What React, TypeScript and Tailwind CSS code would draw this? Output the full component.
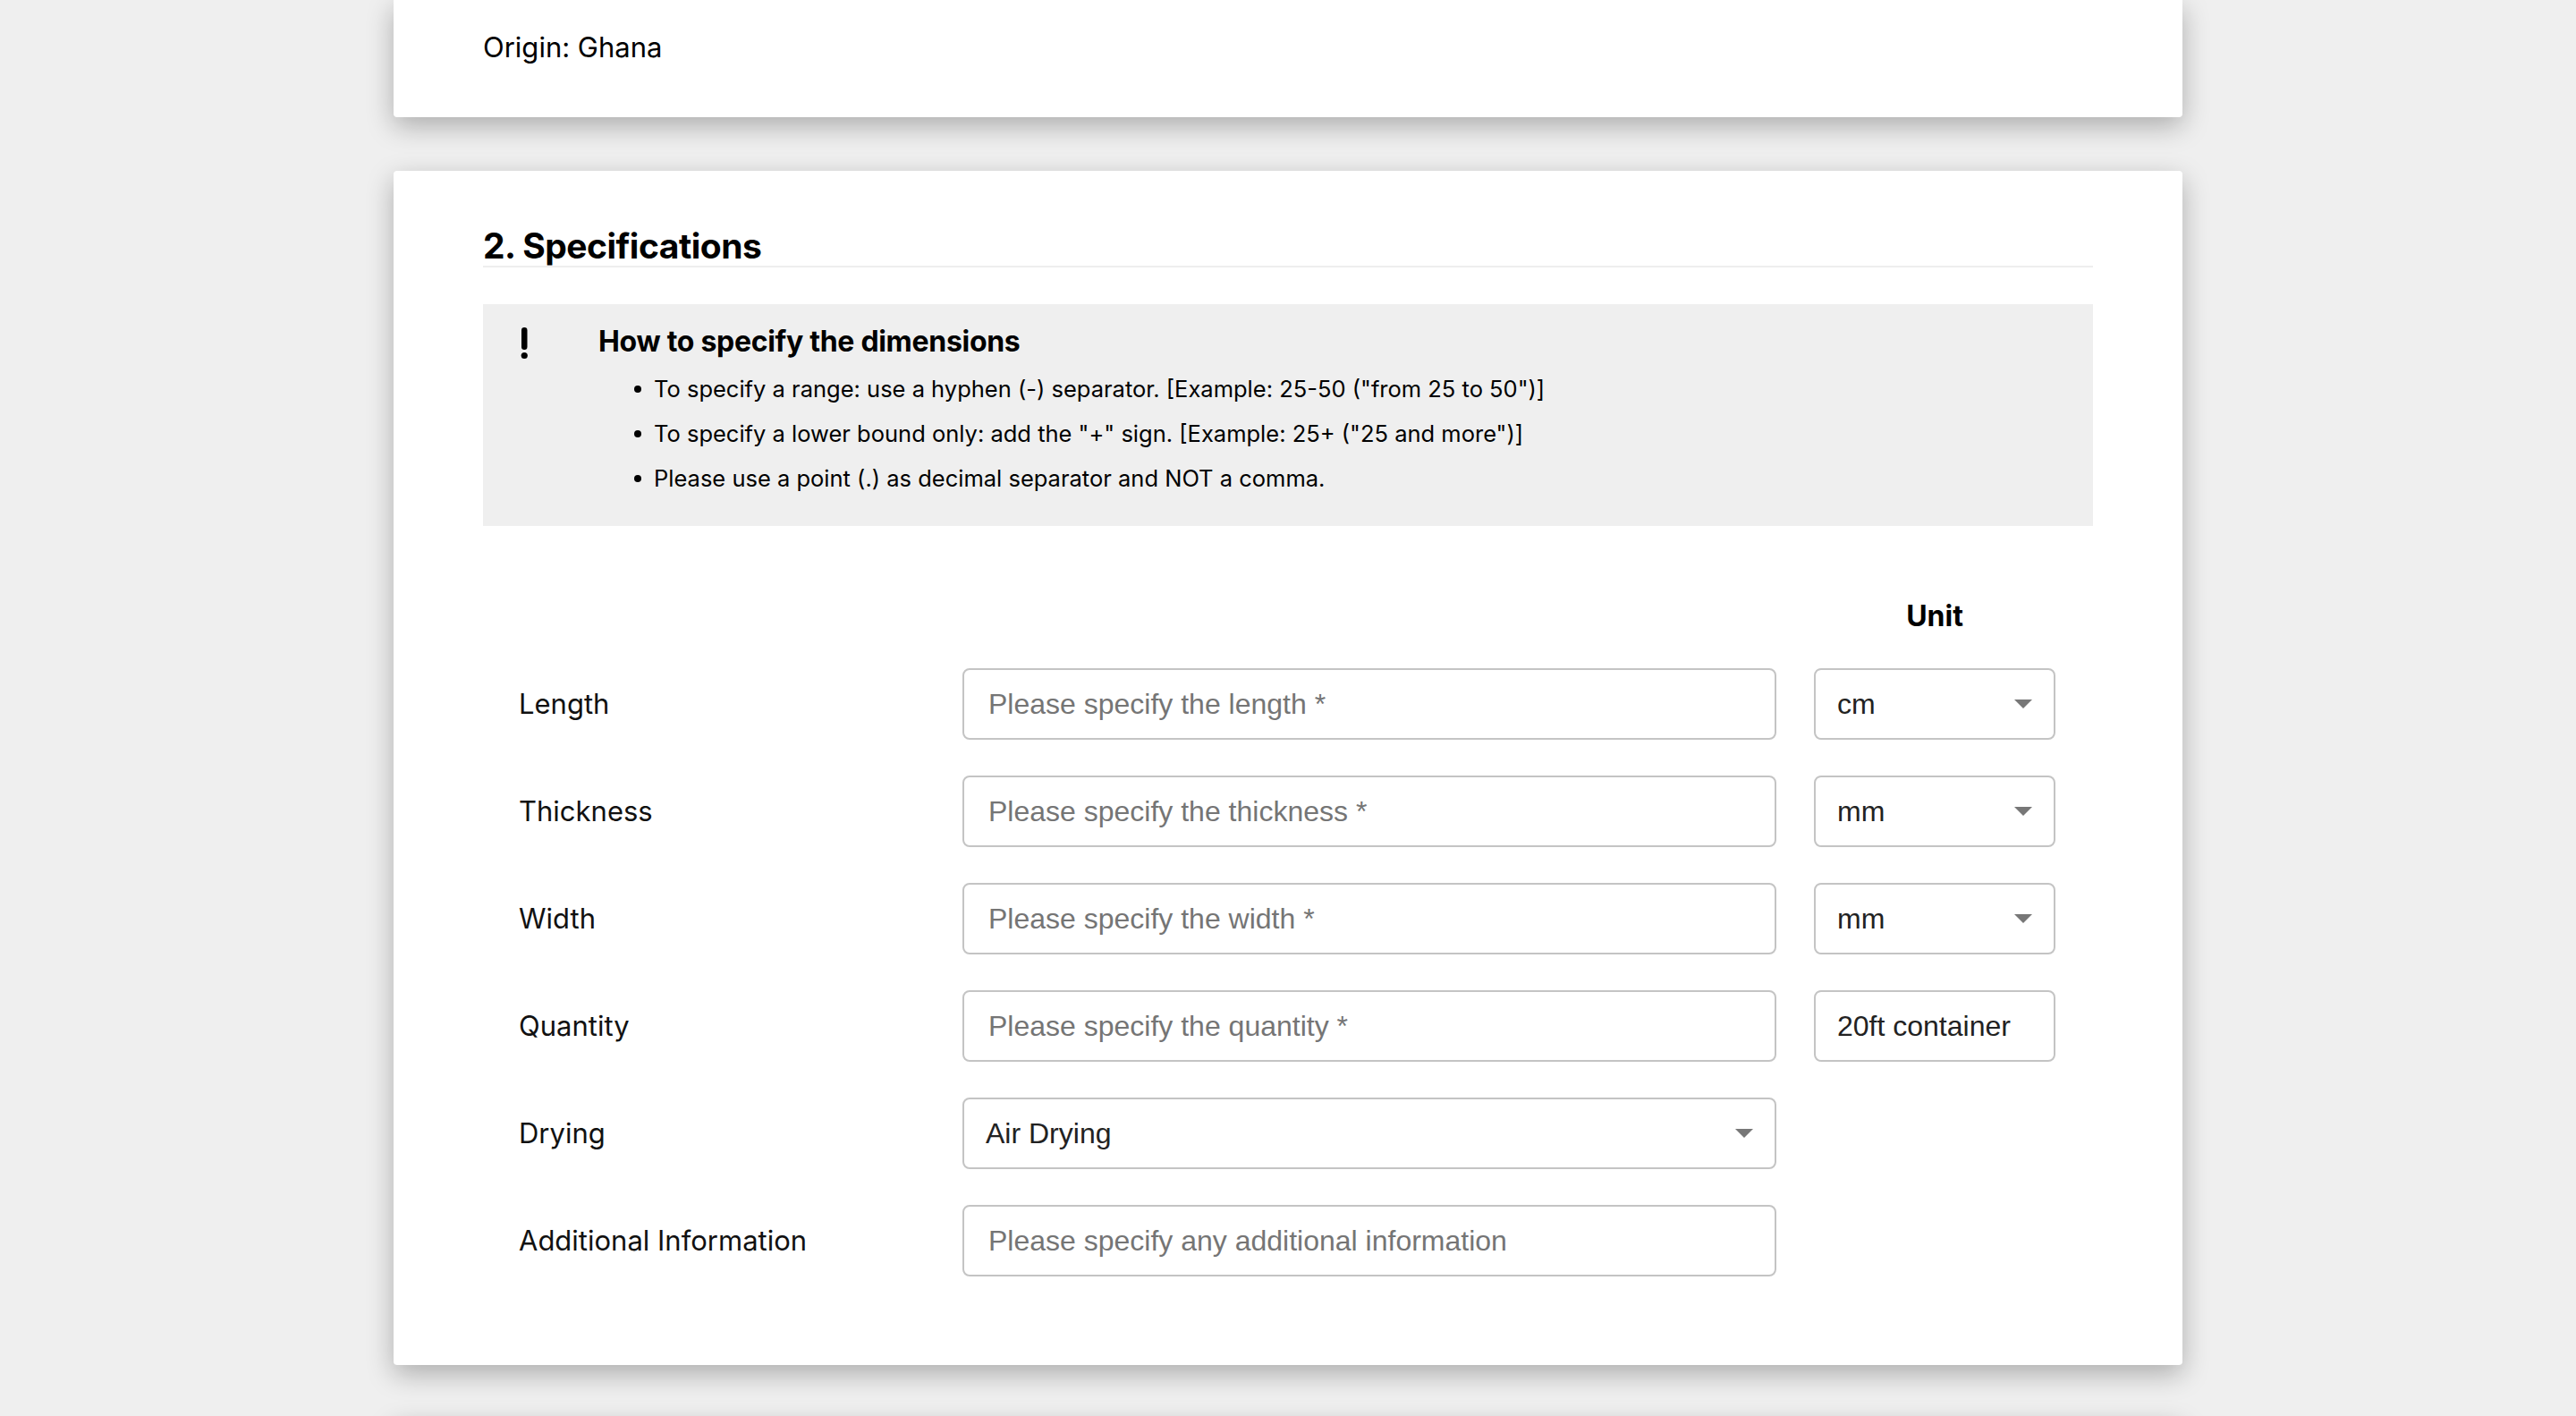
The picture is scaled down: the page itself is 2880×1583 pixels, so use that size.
import React from 'react';

const rows = [
  { label: 'Length', placeholder: 'Please specify the length *', unit: 'cm', select: true },
  { label: 'Thickness', placeholder: 'Please specify the thickness *', unit: 'mm', select: true },
  { label: 'Width', placeholder: 'Please specify the width *', unit: 'mm', select: true },
  { label: 'Quantity', placeholder: 'Please specify the quantity *', unit: '20ft container', select: false },
];

const tips = [
  'To specify a range: use a hyphen (-) separator. [Example: 25-50 ("from 25 to 50")]',
  'To specify a lower bound only: add the "+" sign. [Example: 25+ ("25 and more")]',
  'Please use a point (.) as decimal separator and NOT a comma.',
];

const fieldFont = { fontFamily: '"Liberation Sans", Arial, sans-serif' };

function Caret() {
  return (
    <svg width="20" height="10" viewBox="0 0 20 10" className="shrink-0">
      <path d="M0 0 L20 0 L10 10 Z" fill="#777777" />
    </svg>
  );
}

function TextField({ placeholder }: { placeholder: string }) {
  return (
    <input
      type="text"
      placeholder={placeholder}
      className="h-[80px] w-full rounded-[8px] border-2 border-[#c4c4c4] bg-white px-[27px] text-[32px] text-[#222] outline-none placeholder:text-[#757575]"
      style={fieldFont}
    />
  );
}

function SelectBox({ value, arrow = true }: { value: string; arrow?: boolean }) {
  return (
    <div
      className="flex h-[80px] w-full items-center justify-between rounded-[8px] border-2 border-[#c4c4c4] bg-white px-[24px] text-[32px] text-[#222]"
      style={fieldFont}
    >
      <span>{value}</span>
      {arrow && <Caret />}
    </div>
  );
}

function FormRow({ label, children, unit }: { label: string; children?: React.ReactNode; unit?: React.ReactNode }) {
  return (
    <div className="grid grid-cols-[454px_910px_270px] items-center gap-x-[42px]">
      <div className="text-[31px] leading-[40px] text-[#111]">{label}</div>
      <div>{children}</div>
      <div>{unit}</div>
    </div>
  );
}

export default function App() {
  return (
    <main
      className="min-h-screen bg-[#efefef] text-black"
      style={{ fontFamily: 'Inter, "Noto Sans", sans-serif' }}
    >
      <div className="mx-auto flex w-[2000px] flex-col gap-[60px]">
        <section className="rounded-b-[4px] bg-white px-[100px] pb-[54px] pt-[29px] shadow-[0_10px_30px_rgba(0,0,0,0.28)]">
          <p className="text-[31px] leading-[48px]">Origin: Ghana</p>
        </section>

        <section className="rounded-[4px] bg-white px-[100px] pb-[99px] pt-[60px] shadow-[0_10px_30px_rgba(0,0,0,0.28)]">
          <h2 className="border-b-2 border-[#eeeeee] pt-[2px] text-[39px] font-bold leading-[44px] tracking-[-0.5px]">
            2. Specifications
          </h2>

          <div className="mt-[41px] flex bg-[#efefef] pb-[28px] pt-[22px]">
            <div className="w-[129px] shrink-0 pl-[40px] pt-[4px]">
              <svg width="12" height="36" viewBox="0 0 12 36">
                <rect x="3" y="0" width="6.5" height="25" rx="3.2" fill="#000" />
                <circle cx="6.25" cy="31.5" r="3.6" fill="#000" />
              </svg>
            </div>
            <div className="flex-1">
              <h3 className="text-[32px] font-bold leading-[40px] tracking-[-0.3px]">How to specify the dimensions</h3>
              <ul className="mt-[8px] pl-[40px]">
                {tips.map((t) => (
                  <li key={t} className="flex items-center text-[25.5px] leading-[50px]">
                    <span className="mr-[14px] inline-block h-[8px] w-[8px] rounded-full bg-black" />
                    {t}
                  </li>
                ))}
              </ul>
            </div>
          </div>

          <div className="mt-[81px] flex flex-col gap-[38px] px-[40px]">
            <FormRow label="" unit={<div className="text-center text-[32px] font-bold leading-[40px]">Unit</div>} />

            <div className="flex flex-col gap-[40px]">
              {rows.map((r) => (
                <FormRow
                  key={r.label}
                  label={r.label}
                  unit={<SelectBox value={r.unit} arrow={r.select} />}
                >
                  <TextField placeholder={r.placeholder} />
                </FormRow>
              ))}
              <FormRow label="Drying">
                <SelectBox value="Air Drying" />
              </FormRow>
              <FormRow label="Additional Information">
                <TextField placeholder="Please specify any additional information" />
              </FormRow>
            </div>
          </div>
        </section>

        <section className="h-[400px] rounded-[4px] bg-white shadow-[0_10px_30px_rgba(0,0,0,0.28)]" />
      </div>
    </main>
  );
}
